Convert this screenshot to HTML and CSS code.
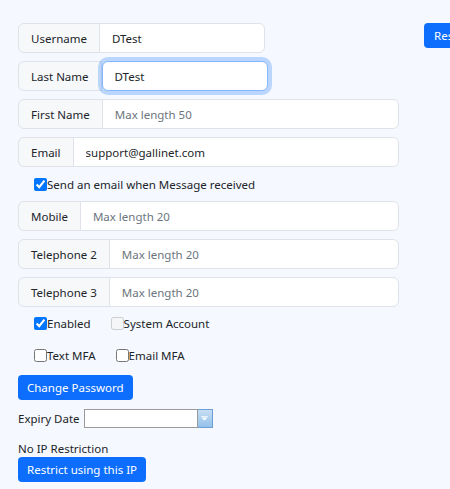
FILE: index.html
```html
<!DOCTYPE html>
<html>
<head>
<meta charset="utf-8">
<link rel="stylesheet" href="styles.css">
</head>
<body>
<div class="page">
  <div class="form">
    <div class="group">
      <span class="glabel">Username</span>
      <input class="ginput short" type="text" value="DTest">
    </div>
    <div class="group">
      <span class="glabel">Last Name</span>
      <input class="ginput short focused" type="text" value="DTest" autofocus>
    </div>
    <div class="group">
      <span class="glabel">First Name</span>
      <input class="ginput" type="text" placeholder="Max length 50">
    </div>
    <div class="group">
      <span class="glabel">Email</span>
      <input class="ginput" type="text" value="support@gallinet.com">
    </div>
    <div class="checkrow first">
      <label class="check"><input type="checkbox" checked>Send an email when Message received</label>
    </div>
    <div class="group">
      <span class="glabel">Mobile</span>
      <input class="ginput" type="text" placeholder="Max length 20">
    </div>
    <div class="group">
      <span class="glabel">Telephone 2</span>
      <input class="ginput" type="text" placeholder="Max length 20">
    </div>
    <div class="group">
      <span class="glabel">Telephone 3</span>
      <input class="ginput" type="text" placeholder="Max length 20">
    </div>
    <div class="checkrow flags">
      <label class="check"><input type="checkbox" checked>Enabled</label>
      <label class="check disabled"><input type="checkbox" disabled>System Account</label>
    </div>
    <div class="checkrow mfa">
      <label class="check"><input type="checkbox">Text MFA</label>
      <label class="check"><input type="checkbox">Email MFA</label>
    </div>
    <div class="btnrow">
      <button class="btn" type="button">Change Password</button>
    </div>
    <div class="expiry">
      <span class="elabel">Expiry Date</span>
      <span class="dpicker">
        <input class="dinput" type="text">
        <span class="dbtn"><svg width="7" height="5" viewBox="0 0 7 5"><rect x="0" y="0" width="7" height="1" fill="#ffffff" opacity="0.7"/><path d="M0.5 1.5 H6.5 L3.5 4.5 Z" fill="#ffffff"/></svg></span>
      </span>
    </div>
    <div class="iptext">No IP Restriction</div>
    <div class="btnrow">
      <button class="btn" type="button">Restrict using this IP</button>
    </div>
  </div>
  <div class="side">
    <button class="btn" type="button">Reset Password</button>
  </div>
</div>
</body>
</html>
```
FILE: styles.css
```css
html, body {
  margin: 0;
  padding: 0;
}
body {
  background: #f5f8fe;
  font-family: "Noto Sans", "Liberation Sans", sans-serif;
  font-size: 11.5px;
  color: #212529;
  overflow: hidden;
  width: 450px;
  height: 489px;
}
.page {
  display: flex;
  align-items: flex-start;
  gap: 25px;
  padding: 23px 0 0 18px;
  width: 700px;
}
.form {
  width: 381px;
  flex: none;
  display: flex;
  flex-direction: column;
  align-items: flex-start;
}
.side {
  flex: none;
}
.group {
  display: flex;
  height: 30px;
  margin-bottom: 8px;
  width: 100%;
}
.group:has(.short) {
  width: auto;
}
.glabel {
  display: flex;
  align-items: center;
  box-sizing: border-box;
  height: 30px;
  padding: 0 12px;
  background: #f7f8fa;
  border: 1px solid #dfe2e8;
  border-radius: 6px 0 0 6px;
  white-space: nowrap;
  color: #212529;
}
.ginput {
  box-sizing: border-box;
  height: 30px;
  flex: 1;
  min-width: 0;
  margin: 0 0 0 -1px;
  padding: 0 12px;
  border: 1px solid #dfe2e8;
  border-radius: 0 6px 6px 0;
  background: #ffffff;
  font-family: inherit;
  font-size: 11.5px;
  color: #212529;
  outline: none;
}
.ginput.short {
  flex: none;
  width: 166px;
}
.ginput::placeholder {
  color: #6c757d;
}
.ginput.focused,
.ginput:focus {
  border-color: #86b7fe;
  box-shadow: 0 0 0 4px rgba(13, 110, 253, 0.25);
  position: relative;
  z-index: 2;
  margin-left: 0;
  border-radius: 6px;
}
.checkrow {
  display: flex;
  align-items: center;
  height: 18px;
  padding-left: 16px;
  gap: 20px;
}
.checkrow.first {
  margin: 0 0 8px;
}
.checkrow.flags {
  margin-top: -1px;
}
.checkrow.mfa {
  margin-top: 14px;
}
.check {
  display: flex;
  align-items: center;
  white-space: nowrap;
}
.check input {
  width: 13px;
  height: 13px;
  margin: 0;
}
.btnrow {
  display: flex;
}
.checkrow.mfa + .btnrow {
  margin-top: 11px;
}
.btn {
  height: 25px;
  padding: 0 9px;
  border: none;
  border-radius: 4px;
  background: #0d6efd;
  color: #ffffff;
  font-family: inherit;
  font-size: 11.5px;
  white-space: nowrap;
}
.side .btn {
  padding: 0 10px;
}
.expiry {
  display: flex;
  align-items: center;
  gap: 4px;
  margin-top: 9px;
}
.dpicker {
  display: flex;
}
.dinput {
  box-sizing: border-box;
  width: 114px;
  height: 19px;
  margin: 0;
  padding: 0 3px;
  border: 1px solid #9a9a9a;
  background: #ffffff;
  font-family: inherit;
  font-size: 11.5px;
  outline: none;
}
.dbtn {
  box-sizing: border-box;
  width: 15px;
  height: 19px;
  border: 1px solid #6d9fd6;
  border-left: none;
  background: linear-gradient(#c7def4, #94c1ea);
  display: flex;
  align-items: center;
  justify-content: center;
}
.iptext {
  margin-top: 13px;
  line-height: 16px;
}
```
